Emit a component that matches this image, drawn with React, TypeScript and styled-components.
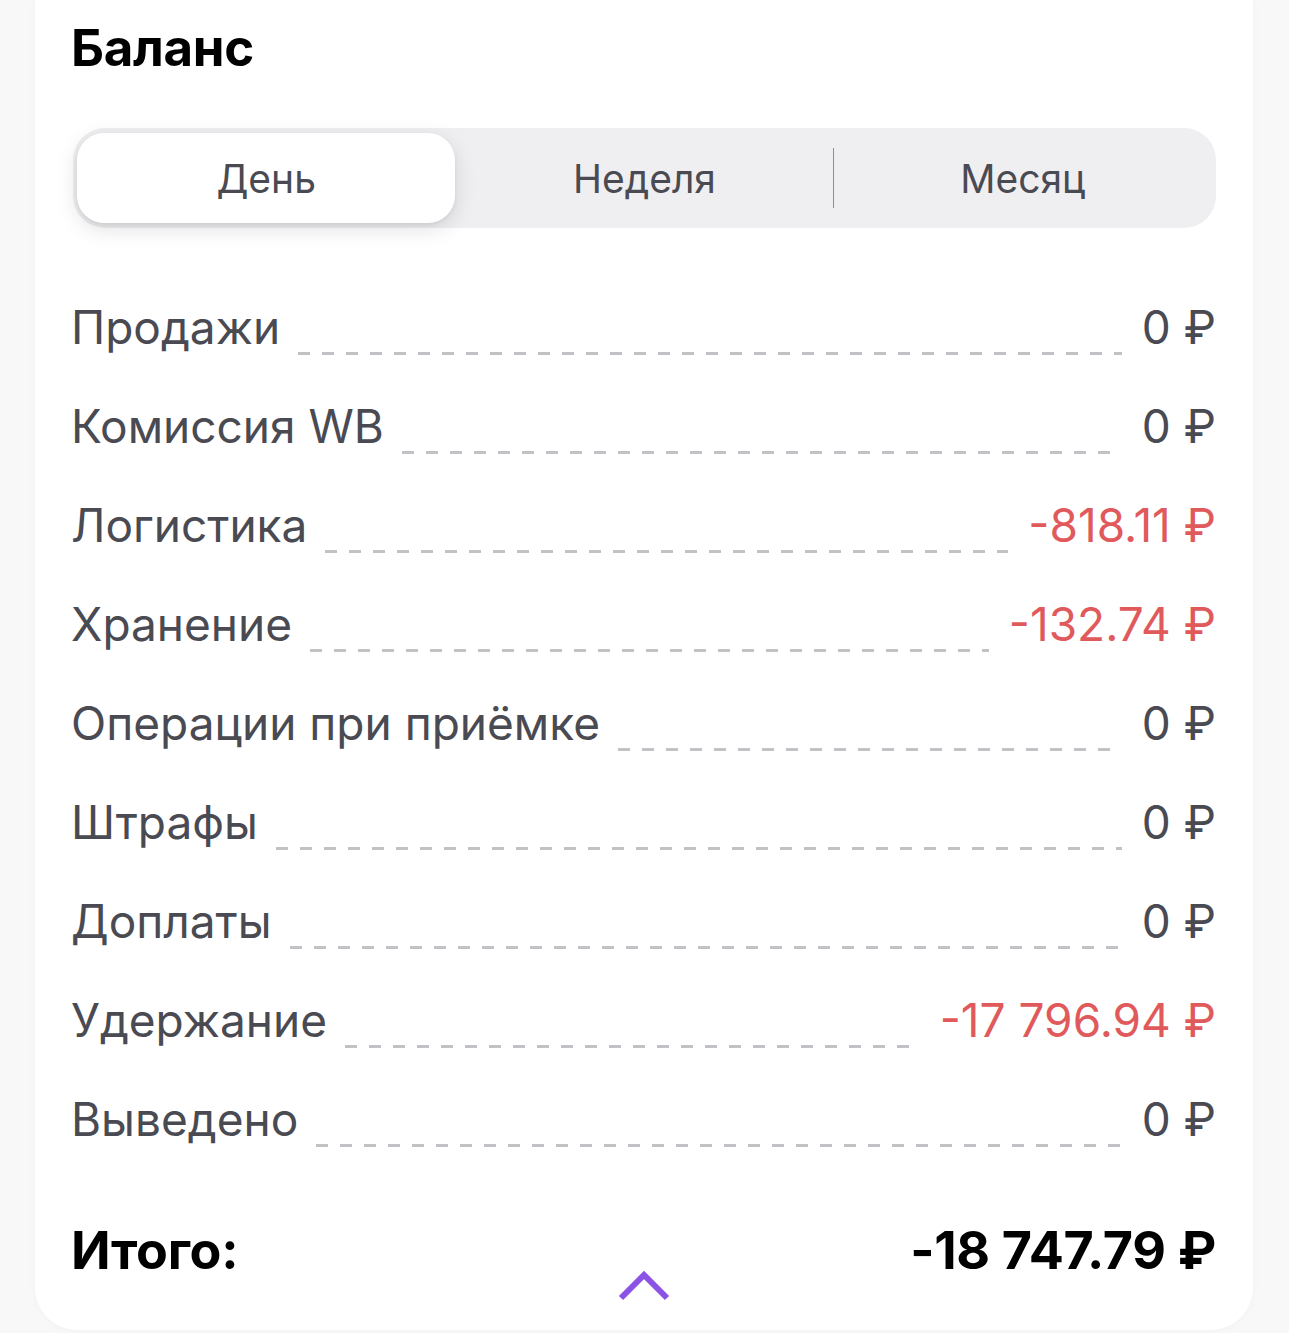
import { useState } from 'react'
import styled, { createGlobalStyle } from 'styled-components'

const rows = [
  { label: 'Продажи', value: '0 ₽' },
  { label: 'Комиссия WB', value: '0 ₽' },
  { label: 'Логистика', value: '-818.11 ₽', negative: true },
  { label: 'Хранение', value: '-132.74 ₽', negative: true },
  { label: 'Операции при приёмке', value: '0 ₽' },
  { label: 'Штрафы', value: '0 ₽' },
  { label: 'Доплаты', value: '0 ₽' },
  { label: 'Удержание', value: '-17 796.94 ₽', negative: true },
  { label: 'Выведено', value: '0 ₽' }
]

const periods = ['День', 'Неделя', 'Месяц']

export default function App() {
  const [period, setPeriod] = useState(0)

  return (
    <>
      <Global />
      <S.Page>
        <S.Card>
          <S.Title>Баланс</S.Title>
          <S.Segments>
            {periods.map((p, i) => (
              <S.Segment key={p} active={i === period} divider={i === 1 && period === 0} onClick={() => setPeriod(i)}>
                {p}
              </S.Segment>
            ))}
          </S.Segments>
          <S.List>
            {rows.map((r) => (
              <S.Row key={r.label}>
                <S.Label>{r.label}</S.Label>
                <S.Dots />
                <S.Value negative={r.negative}>{r.value}</S.Value>
              </S.Row>
            ))}
          </S.List>
          <S.Total>
            <S.TotalText>Итого:</S.TotalText>
            <S.TotalText>-18 747.79 ₽</S.TotalText>
            <S.Chevron width="54" height="32" viewBox="0 0 54 32">
              <path d="M4 29 L27 6 L50 29" fill="none" stroke="#8b52e6" strokeWidth="6" />
            </S.Chevron>
          </S.Total>
        </S.Card>
      </S.Page>
    </>
  )
}

const Global = createGlobalStyle`
  body {
    margin: 0;
    background: #f8f8f9;
    font-family: Inter, 'Noto Sans', sans-serif;
  }
`

const S = {
  Page: styled.div`
    width: 1289px;
    height: 1333px;
    padding: 0 36px 3px 35px;
    box-sizing: border-box;
  `,
  Card: styled.div`
    height: 100%;
    background: #fff;
    border-radius: 0 0 42px 42px;
    box-shadow: 0 0 8px rgba(0, 0, 0, 0.03);
    padding: 17px 37px 0 36px;
    box-sizing: border-box;
    display: flex;
    flex-direction: column;
  `,
  Title: styled.h1`
    margin: 0;
    font-size: 51px;
    line-height: 62px;
    font-weight: 700;
    color: #000;
    letter-spacing: -0.3px;
  `,
  Segments: styled.div`
    margin-top: 49px;
    margin-left: 2px;
    height: 100px;
    border-radius: 32px;
    background: #efeff2;
    padding: 5px 4px;
    box-sizing: border-box;
    display: grid;
    grid-template-columns: repeat(3, 1fr);
  `,
  Segment: styled.div<{ active: boolean; divider: boolean }>`
    display: flex;
    align-items: center;
    justify-content: center;
    font-size: 39px;
    color: #4a4a52;
    border-radius: 27px;
    position: relative;
    cursor: pointer;
    background: ${(p) => (p.active ? '#fff' : 'transparent')};
    box-shadow: ${(p) => (p.active ? '0 6px 22px rgba(0, 0, 0, 0.12), 0 2px 4px rgba(0, 0, 0, 0.06)' : 'none')};
    &:after {
      content: '';
      display: ${(p) => (p.divider ? 'block' : 'none')};
      position: absolute;
      right: 0;
      top: 15px;
      bottom: 15px;
      width: 1px;
      background: #8e8e93;
    }
  `,
  List: styled.div`
    margin-top: 71px;
    display: flex;
    flex-direction: column;
  `,
  Row: styled.div`
    height: 99px;
    display: flex;
    align-items: baseline;
  `,
  Label: styled.span`
    font-size: 46px;
    color: #4a4a52;
    white-space: nowrap;
  `,
  Dots: styled.span`
    flex: 1;
    align-self: flex-start;
    height: 3px;
    margin: 53px 20px 0 18px;
    background-image: linear-gradient(to right, #c2c2c6 50%, transparent 50%);
    background-size: 24px 3px;
    background-repeat: repeat-x;
  `,
  Value: styled.span<{ negative?: boolean }>`
    font-size: 46px;
    color: ${(p) => (p.negative ? '#e05a5c' : '#4a4a52')};
    white-space: nowrap;
  `,
  Total: styled.div`
    margin-top: 29px;
    position: relative;
    display: flex;
    justify-content: space-between;
    align-items: baseline;
  `,
  TotalText: styled.span`
    font-size: 52px;
    font-weight: 700;
    color: #000;
    letter-spacing: -0.3px;
  `,
  Chevron: styled.svg`
    position: absolute;
    left: 546px;
    top: 50px;
  `
}
